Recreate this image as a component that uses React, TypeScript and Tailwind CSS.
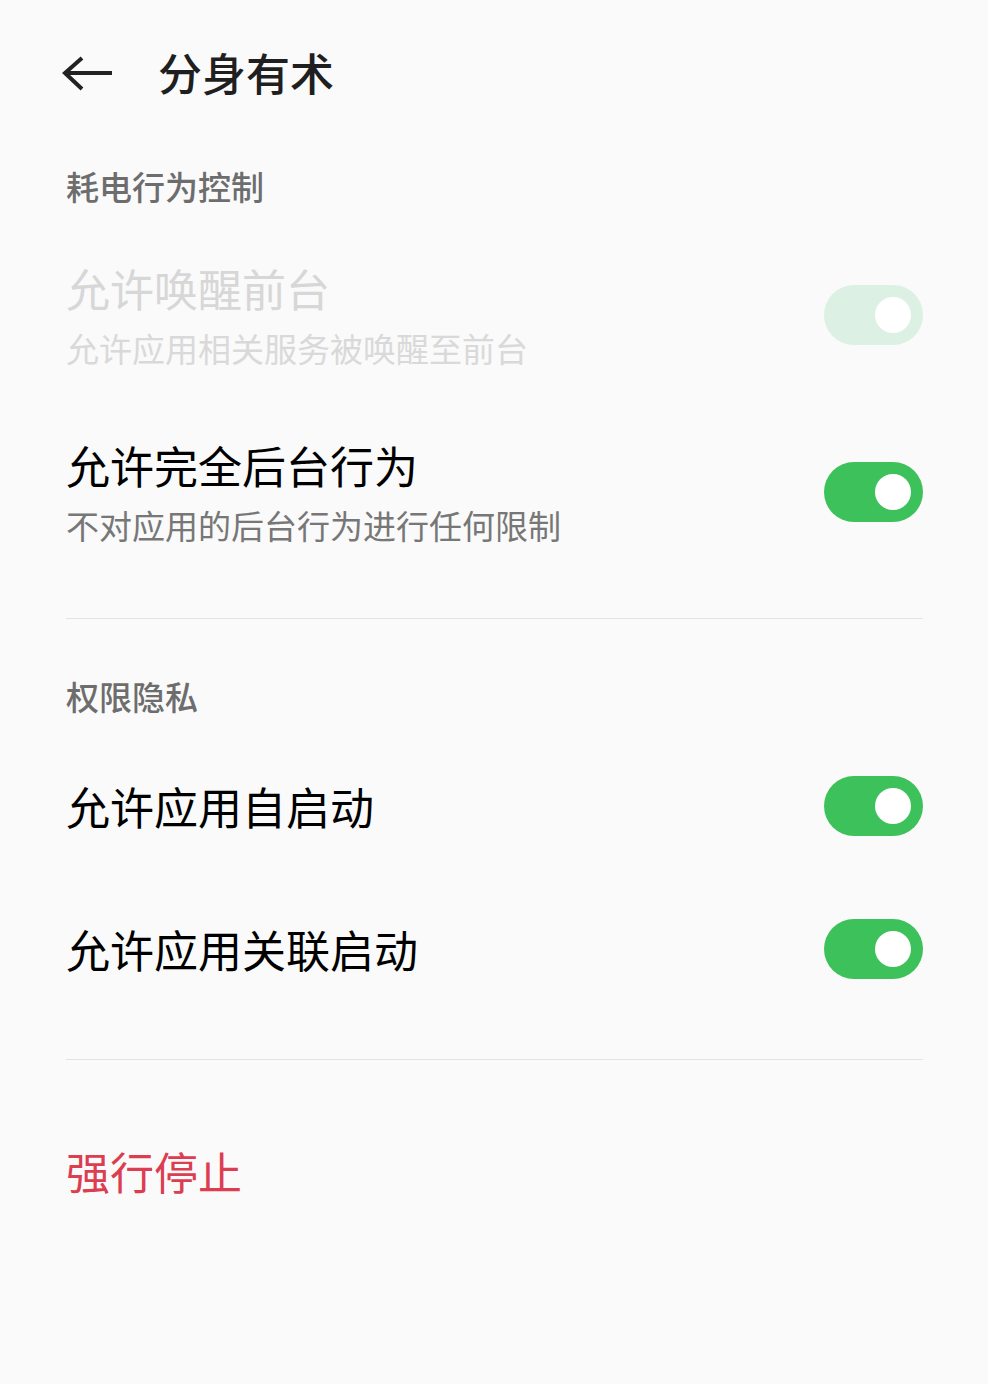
import React from "react";

// ─── Types ────────────────────────────────────────────────────────────────────

interface SwitchRowProps {
  title: string;
  subtitle?: string;
  disabled?: boolean;
  className?: string;
}

// ─── Pieces ───────────────────────────────────────────────────────────────────

function BackArrow() {
  return (
    <svg width="56" height="48" viewBox="0 0 56 48" fill="none" className="shrink-0">
      <path
        d="M52 22H5M22 7L5 22L22 38"
        stroke="#222222"
        strokeWidth="4"
        strokeLinecap="butt"
        strokeLinejoin="miter"
      />
    </svg>
  );
}

function Toggle({ disabled = false }: { disabled?: boolean }) {
  return (
    <div
      className={`flex h-[60px] w-[99px] shrink-0 items-center justify-end rounded-full pr-[12px] ${
        disabled ? "bg-[#dcf0e3]" : "bg-[#3dc15a]"
      }`}
    >
      <div className="h-[36px] w-[36px] rounded-full bg-white" />
    </div>
  );
}

function SectionLabel({ text, className = "" }: { text: string; className?: string }) {
  return (
    <div className={`text-[33px] font-medium leading-[44px] text-[#6d6d6d] ${className}`}>
      {text}
    </div>
  );
}

function SwitchRow({ title, subtitle, disabled = false, className = "" }: SwitchRowProps) {
  return (
    <div className={`flex items-center justify-between ${className}`}>
      <div className="flex flex-col">
        <div
          className={`text-[44px] leading-[58px] ${disabled ? "text-[#d7d7d7]" : "text-black"}`}
        >
          {title}
        </div>
        {subtitle && (
          <div
            className={`mt-[9px] text-[33px] leading-[44px] ${
              disabled ? "text-[#d9d9d9]" : "text-[#777777]"
            }`}
          >
            {subtitle}
          </div>
        )}
      </div>
      <Toggle disabled={disabled} />
    </div>
  );
}

// ─── Page ─────────────────────────────────────────────────────────────────────

export default function App() {
  return (
    <div
      className="min-h-[1384px] w-full bg-[#fafafa]"
      style={{ fontFamily: '"Noto Sans CJK SC", "Noto Sans", sans-serif' }}
    >
      <header className="flex h-[150px] items-center pl-[60px]">
        <BackArrow />
        <h1 className="mb-[6px] ml-[42px] text-[44px] font-medium leading-[58px] text-[#1f1f1f]">
          分身有术
        </h1>
      </header>

      <main className="px-[66px] pr-[65px]">
        <SectionLabel text="耗电行为控制" className="mt-[14px]" />

        <SwitchRow
          title="允许唤醒前台"
          subtitle="允许应用相关服务被唤醒至前台"
          disabled
          className="mt-[51px]"
        />
        <SwitchRow
          title="允许完全后台行为"
          subtitle="不对应用的后台行为进行任何限制"
          className="mt-[66px]"
        />

        <div className="mt-[71px] h-px bg-[#e3e3e3]" />

        <SectionLabel text="权限隐私" className="mt-[55px]" />

        <SwitchRow title="允许应用自启动" className="mt-[58px]" />
        <SwitchRow title="允许应用关联启动" className="mt-[83px]" />

        <div className="mt-[80px] h-px bg-[#e3e3e3]" />

        <div className="mt-[82px] text-[44px] leading-[58px] text-[#dc3d51]">强行停止</div>
      </main>
    </div>
  );
}
